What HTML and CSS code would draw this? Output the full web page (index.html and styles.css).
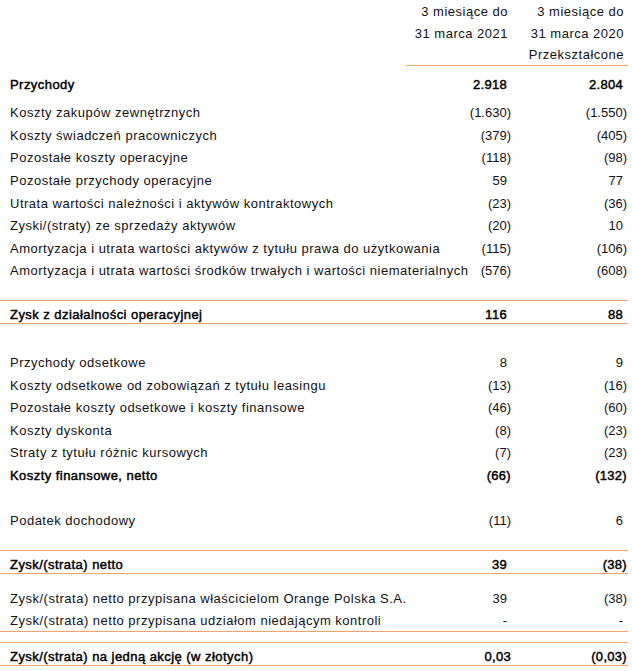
FILE: index.html
```html
<!DOCTYPE html>
<html lang="pl">
<head>
<meta charset="utf-8">
<title>Rachunek zysków i strat</title>
<link rel="stylesheet" href="styles.css">
</head>
<body>
<div class="stmt">
  <div class="row hdr"><div class="lbl"></div><div class="num h">3 miesiące do</div><div class="num h">3 miesiące do</div></div>
  <div class="row hdr"><div class="lbl"></div><div class="num h">31 marca 2021</div><div class="num h">31 marca 2020</div></div>
  <div class="row hdr last"><div class="lbl"></div><div class="num h"></div><div class="num h">Przekształcone</div></div>

  <div class="row b m-rev"><div class="lbl">Przychody</div><div class="num p">2.918</div><div class="num p">2.804</div></div>

  <div class="row m-first"><div class="lbl">Koszty zakupów zewnętrznych</div><div class="num">(1.630)</div><div class="num">(1.550)</div></div>
  <div class="row"><div class="lbl">Koszty świadczeń pracowniczych</div><div class="num">(379)</div><div class="num">(405)</div></div>
  <div class="row"><div class="lbl">Pozostałe koszty operacyjne</div><div class="num">(118)</div><div class="num">(98)</div></div>
  <div class="row"><div class="lbl">Pozostałe przychody operacyjne</div><div class="num p">59</div><div class="num p">77</div></div>
  <div class="row"><div class="lbl">Utrata wartości należności i aktywów kontraktowych</div><div class="num">(23)</div><div class="num">(36)</div></div>
  <div class="row"><div class="lbl">Zyski/(straty) ze sprzedaży aktywów</div><div class="num">(20)</div><div class="num p">10</div></div>
  <div class="row"><div class="lbl">Amortyzacja i utrata wartości aktywów z tytułu prawa do użytkowania</div><div class="num">(115)</div><div class="num">(106)</div></div>
  <div class="row"><div class="lbl">Amortyzacja i utrata wartości środków trwałych i wartości niematerialnych</div><div class="num">(576)</div><div class="num">(608)</div></div>

  <div class="row b total m-total"><div class="lbl">Zysk z działalności operacyjnej</div><div class="num p">116</div><div class="num p">88</div></div>

  <div class="row m-fin"><div class="lbl">Przychody odsetkowe</div><div class="num p">8</div><div class="num p">9</div></div>
  <div class="row"><div class="lbl">Koszty odsetkowe od zobowiązań z tytułu leasingu</div><div class="num">(13)</div><div class="num">(16)</div></div>
  <div class="row"><div class="lbl">Pozostałe koszty odsetkowe i koszty finansowe</div><div class="num">(46)</div><div class="num">(60)</div></div>
  <div class="row"><div class="lbl">Koszty dyskonta</div><div class="num">(8)</div><div class="num">(23)</div></div>
  <div class="row"><div class="lbl">Straty z tytułu różnic kursowych</div><div class="num">(7)</div><div class="num">(23)</div></div>
  <div class="row b"><div class="lbl">Koszty finansowe, netto</div><div class="num">(66)</div><div class="num">(132)</div></div>

  <div class="row m-tax"><div class="lbl">Podatek dochodowy</div><div class="num">(11)</div><div class="num p">6</div></div>

  <div class="row b total m-total"><div class="lbl">Zysk/(strata) netto</div><div class="num p">39</div><div class="num">(38)</div></div>

  <div class="row m-attr"><div class="lbl">Zysk/(strata) netto przypisana właścicielom Orange Polska S.A.</div><div class="num p">39</div><div class="num">(38)</div></div>
  <div class="row under"><div class="lbl">Zysk/(strata) netto przypisana udziałom niedającym kontroli</div><div class="num p">-</div><div class="num p">-</div></div>

  <div class="row b total m-eps"><div class="lbl">Zysk/(strata) na jedną akcję (w złotych)</div><div class="num">0,03</div><div class="num">(0,03)</div></div>
</div>
</body>
</html>
```

FILE: styles.css
```css
* { box-sizing: border-box; }

body {
  margin: 0;
  background: #ffffff;
  color: #111111;
  font-family: "Liberation Sans", Arial, sans-serif;
  font-size: 13px;
}

.stmt {
  width: 628px;
  display: flex;
  flex-direction: column;
}

.row {
  display: grid;
  grid-template-columns: minmax(0, 1fr) 106px 116px;
  align-items: center;
  height: 22.6px;
  line-height: 15px;
}

.lbl {
  padding-left: 10px;
  white-space: nowrap;
  letter-spacing: 0.5px;
}

.num {
  text-align: right;
  padding-right: 1px;
  white-space: nowrap;
}

.num.p { padding-right: 5px; }
.num.h {
  padding-right: 4px;
  letter-spacing: 0.5px;
}

.hdr { height: 22px; }
.hdr.last { align-items: stretch; }
.hdr.last .num {
  border-bottom: 1px solid #f0a36c;
  display: flex;
  align-items: center;
  justify-content: flex-end;
}

/* medium-weight emphasis, lighter than a full bold */
.b {
  font-weight: normal;
  color: #000000;
  -webkit-text-stroke: 0.45px #000000;
}
.b .lbl { letter-spacing: 0.45px; }
.b .num { letter-spacing: 0.3px; }

.total {
  height: 24px;
  align-items: start;
  padding-top: 6px;
  border-top: 1px solid #f0a36c;
  border-bottom: 1px solid #f0a36c;
}

.under { border-bottom: 1px solid #f0a36c; }

.m-rev { margin-top: 7.7px; }
.m-first { margin-top: 5.1px; }
.m-total { margin-top: 17.8px; }
.m-fin { margin-top: 27.4px; }
.m-tax { margin-top: 22.6px; }
.m-attr { margin-top: 13.4px; }
.m-eps { margin-top: 9.4px; }
```
